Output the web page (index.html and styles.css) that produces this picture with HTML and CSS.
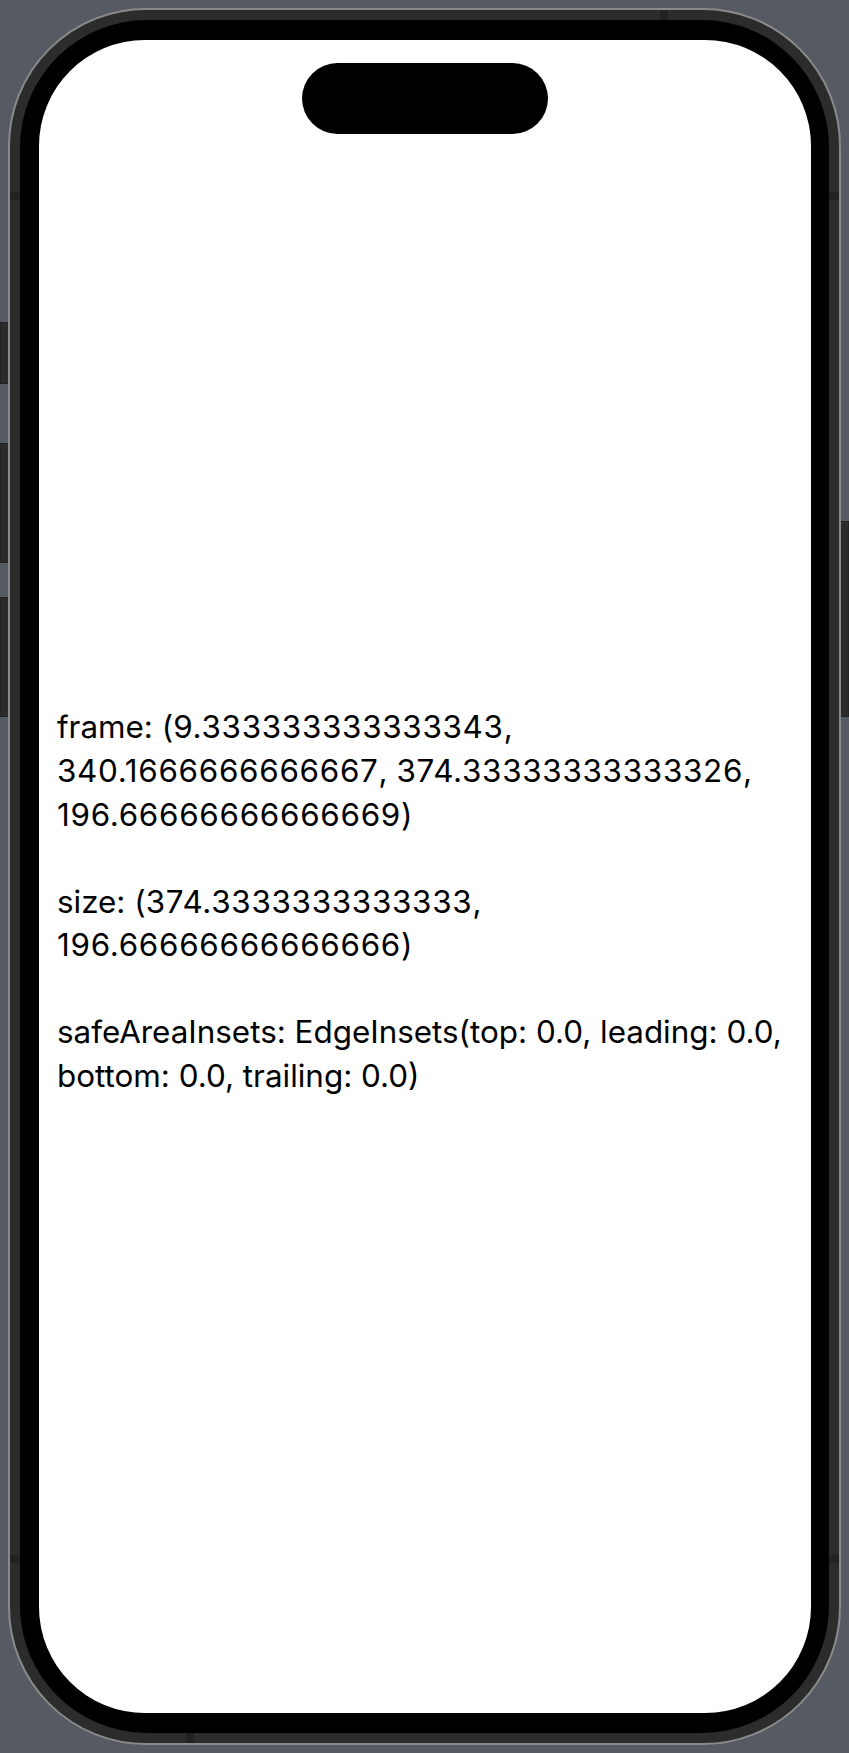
FILE: index.html
```html
<!DOCTYPE html>
<html lang="en">
<head>
    <meta charset="UTF-8">
    <meta name="viewport" content="width=device-width, initial-scale=1.0">
    <title>GeometryReader</title>
    <link rel="stylesheet" href="styles.css">
</head>
<body>
    <div class="stage">
        <!-- hardware keys on the sides -->
        <span class="key key-left key-action"></span>
        <span class="key key-left key-vol-up"></span>
        <span class="key key-left key-vol-down"></span>
        <span class="key key-right key-power"></span>

        <div class="device">
            <!-- antenna lines in the frame -->
            <span class="band band-v band-tl"></span>
            <span class="band band-v band-tr"></span>
            <span class="band band-v band-bl"></span>
            <span class="band band-v band-br"></span>
            <span class="band band-h band-top"></span>
            <span class="band band-h band-bottom"></span>

            <div class="bezel">
                <div class="screen">
                    <div class="island"></div>
                    <p class="info">frame: (<span class="num">9.333333333333343</span>,<br><span class="num">340.1666666666667</span>, <span class="num">374.33333333333326</span>,<br><span class="num">196.66666666666669</span>)<br><br>size: (<span class="num">374.3333333333333</span>,<br><span class="num">196.66666666666666</span>)<br><br>safeAreaInsets: EdgeInsets(top: 0.0, leading: 0.0,<br>bottom: 0.0, trailing: 0.0)</p>
                </div>
            </div>
        </div>
    </div>
</body>
</html>
```

FILE: styles.css
```css
body {
    margin: 0;
    padding: 0;
    background: #565b63;
    overflow: hidden;
}

.stage {
    position: relative;
    width: 849px;
    height: 1753px;
    padding: 8px;
    box-sizing: border-box;
}

/* side keys */
.key {
    position: absolute;
    width: 9px;
    background: #2b2b2b;
    box-shadow: inset 0 0 0 1px #222;
}

.key-left {
    left: 0;
}

.key-right {
    right: 0;
}

.key-action {
    top: 322px;
    height: 62px;
}

.key-vol-up {
    top: 443px;
    height: 120px;
}

.key-vol-down {
    top: 597px;
    height: 120px;
}

.key-power {
    top: 521px;
    height: 196px;
}

/* phone body */
.device {
    position: relative;
    height: 100%;
    padding: 10px;
    box-sizing: border-box;
    background: #2c2c2c;
    border: 2px solid #8a8a8a;
    border-radius: 138px;
}

.band {
    position: absolute;
    background: #222;
}

.band-v {
    width: 10px;
    height: 8px;
}

.band-h {
    width: 8px;
    height: 10px;
}

.band-tl {
    left: 0;
    top: 182px;
}

.band-tr {
    right: 0;
    top: 182px;
}

.band-bl {
    left: 0;
    bottom: 180px;
}

.band-br {
    right: 0;
    bottom: 180px;
}

.band-top {
    top: 0;
    left: 650px;
}

.band-bottom {
    bottom: 0;
    left: 176px;
}

.bezel {
    height: 100%;
    padding: 20px 18px 20px 19px;
    box-sizing: border-box;
    background: #000;
    border-radius: 127px;
}

.screen {
    position: relative;
    height: 100%;
    padding: 52px 18px 0 18px;
    box-sizing: border-box;
    background: #fff;
    border-radius: 106px;
    display: flex;
    flex-direction: column;
    justify-content: center;
}

.island {
    position: absolute;
    top: 23px;
    left: 50%;
    width: 246px;
    height: 71px;
    margin-left: -123px;
    background: #000;
    border-radius: 36px;
}

.info {
    margin: 0;
    font-family: "Inter", "Liberation Sans", sans-serif;
    font-size: 31.4px;
    line-height: 43.6px;
    color: #000;
    white-space: nowrap;
}

.info .num {
    letter-spacing: 0.7px;
}
```
